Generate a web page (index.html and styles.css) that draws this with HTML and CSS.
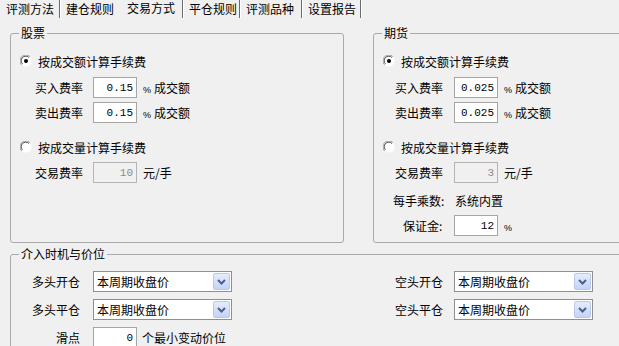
FILE: index.html
```html
<!DOCTYPE html>
<html lang="zh-CN">
<head>
    <meta charset="UTF-8">
    <title>交易方式</title>
    <link rel="stylesheet" href="styles.css">
</head>
<body>
    <div class="tabs">
        <span class="tab t1">评测方法</span>
        <span class="tab t2">建仓规则</span>
        <span class="tab t3 active">交易方式</span>
        <span class="tab t4">平仓规则</span>
        <span class="tab t5">评测品种</span>
        <span class="tab t6">设置报告</span>
    </div>

    <div class="top-row">
        <fieldset class="group stock">
            <legend>股票</legend>
            <div class="radio-row r1">
                <svg class="radio" width="12" height="12" viewBox="0 0 12 12"><circle cx="6" cy="6" r="5.5" fill="#fff"/><path d="M1.6 9.9 A5.5 5.5 0 0 1 9.9 1.6" stroke="#9a9a9a" fill="none"/><path d="M2.5 8.9 A4.4 4.4 0 0 1 8.9 2.5" stroke="#4a4a4a" fill="none"/><circle cx="6" cy="6" r="2" fill="#000"/></svg>
                <span>按成交额计算手续费</span>
            </div>
            <div class="field f1"><span class="lbl">买入费率</span><input class="num" type="text" value="0.15" readonly><span class="unit"><span class="pct">%</span>成交额</span></div>
            <div class="field f2"><span class="lbl">卖出费率</span><input class="num" type="text" value="0.15" readonly><span class="unit"><span class="pct">%</span>成交额</span></div>
            <div class="radio-row r2">
                <svg class="radio" width="12" height="12" viewBox="0 0 12 12"><circle cx="6" cy="6" r="5.5" fill="#fff"/><path d="M1.6 9.9 A5.5 5.5 0 0 1 9.9 1.6" stroke="#9a9a9a" fill="none"/><path d="M2.5 8.9 A4.4 4.4 0 0 1 8.9 2.5" stroke="#4a4a4a" fill="none"/></svg>
                <span>按成交量计算手续费</span>
            </div>
            <div class="field f3"><span class="lbl">交易费率</span><input class="num disabled" type="text" value="10" readonly><span class="unit">元/手</span></div>
        </fieldset>

        <fieldset class="group futures">
            <legend>期货</legend>
            <div class="radio-row r1">
                <svg class="radio" width="12" height="12" viewBox="0 0 12 12"><circle cx="6" cy="6" r="5.5" fill="#fff"/><path d="M1.6 9.9 A5.5 5.5 0 0 1 9.9 1.6" stroke="#9a9a9a" fill="none"/><path d="M2.5 8.9 A4.4 4.4 0 0 1 8.9 2.5" stroke="#4a4a4a" fill="none"/><circle cx="6" cy="6" r="2" fill="#000"/></svg>
                <span>按成交额计算手续费</span>
            </div>
            <div class="field f1"><span class="lbl">买入费率</span><input class="num" type="text" value="0.025" readonly><span class="unit"><span class="pct">%</span>成交额</span></div>
            <div class="field f2"><span class="lbl">卖出费率</span><input class="num" type="text" value="0.025" readonly><span class="unit"><span class="pct">%</span>成交额</span></div>
            <div class="radio-row r2">
                <svg class="radio" width="12" height="12" viewBox="0 0 12 12"><circle cx="6" cy="6" r="5.5" fill="#fff"/><path d="M1.6 9.9 A5.5 5.5 0 0 1 9.9 1.6" stroke="#9a9a9a" fill="none"/><path d="M2.5 8.9 A4.4 4.4 0 0 1 8.9 2.5" stroke="#4a4a4a" fill="none"/></svg>
                <span>按成交量计算手续费</span>
            </div>
            <div class="field f3"><span class="lbl">交易费率</span><input class="num disabled" type="text" value="3" readonly><span class="unit">元/手</span></div>
            <div class="info"><span class="info-key">每手乘数:</span><span>系统内置</span></div>
            <div class="field f4"><span class="lbl margin-lbl">保证金:</span><input class="num" type="text" value="12" readonly><span class="unit"><span class="pct">%</span></span></div>
        </fieldset>
    </div>

    <fieldset class="group entry">
        <legend>介入时机与价位</legend>
        <div class="entry-grid">
            <span class="lbl-left">多头开仓</span>
            <div class="combo"><span>本周期收盘价</span><span class="drop"><svg width="9" height="6" viewBox="0 0 9 6"><path d="M1 1 L4.5 4.5 L8 1" stroke="#4b5f88" stroke-width="2" fill="none"/></svg></span></div>
            <span class="lbl-right">空头开仓</span>
            <div class="combo"><span>本周期收盘价</span><span class="drop"><svg width="9" height="6" viewBox="0 0 9 6"><path d="M1 1 L4.5 4.5 L8 1" stroke="#4b5f88" stroke-width="2" fill="none"/></svg></span></div>

            <span class="lbl-left">多头平仓</span>
            <div class="combo"><span>本周期收盘价</span><span class="drop"><svg width="9" height="6" viewBox="0 0 9 6"><path d="M1 1 L4.5 4.5 L8 1" stroke="#4b5f88" stroke-width="2" fill="none"/></svg></span></div>
            <span class="lbl-right">空头平仓</span>
            <div class="combo"><span>本周期收盘价</span><span class="drop"><svg width="9" height="6" viewBox="0 0 9 6"><path d="M1 1 L4.5 4.5 L8 1" stroke="#4b5f88" stroke-width="2" fill="none"/></svg></span></div>

            <span class="lbl-left">滑点</span>
            <div class="slip"><input class="num" type="text" value="0" readonly><span class="unit">个最小变动价位</span></div>
        </div>
    </fieldset>
</body>
</html>
```

FILE: styles.css
```css
body {
    margin: 0;
    width: 619px;
    height: 346px;
    overflow: hidden;
    background-color: #f0f0f0;
    font-family: "Noto Sans CJK SC", "Noto Sans", sans-serif;
    font-size: 12px;
    color: #000;
}

/* 顶部标签 */
.tabs {
    display: flex;
    height: 18px;
}

.tab {
    box-sizing: border-box;
    height: 18px;
    line-height: 18px;
    padding-left: 6px;
    border-right: 1px solid #6b6b6b;
    box-shadow: 1px 0 0 #fff;
    white-space: nowrap;
}

.t1 { width: 60px; }
.t2 { width: 61px; border-right: none; box-shadow: none; }
.t3 { width: 62px; }
.t4 { width: 57px; }
.t5 { width: 62px; }
.t6 { width: 59px; }

.tab.active {
    line-height: 16px;
}

/* 分组框 */
.group {
    box-sizing: border-box;
    margin: 0;
    padding: 0;
    min-width: 0;
    border: 1px solid #a9a9a9;
    border-radius: 3px;
}

.group legend {
    margin-left: 8px;
    padding: 0 2px;
    line-height: 14px;
    font-size: 12px;
}

.top-row {
    display: flex;
    margin-top: 8px;
    padding-left: 10px;
}

.stock {
    flex-shrink: 0;
    width: 334px;
    height: 217px;
}

.futures {
    flex-shrink: 0;
    width: 270px;
    height: 217px;
    margin-left: 29px;
}

.radio-row {
    display: flex;
    align-items: center;
    height: 20px;
    padding-left: 9px;
}

.radio {
    margin-right: 6px;
}

.field {
    display: flex;
    align-items: center;
    height: 21px;
}

.stock .field { padding-left: 24px; }
.stock .lbl { width: 58px; }
.futures .field { padding-left: 21px; }
.futures .lbl { width: 59px; }

.futures .margin-lbl {
    box-sizing: border-box;
    padding-left: 8px;
}

.r1 { margin-top: 11px; }
.f1 { margin-top: 6px; }
.f2 { margin-top: 4px; }
.r2 { margin-top: 14px; }
.f3 { margin-top: 5px; }
.f4 { margin-top: 5px; }

.info {
    display: flex;
    align-items: center;
    height: 20px;
    margin-top: 7px;
    padding-left: 19px;
}

.info-key {
    width: 62px;
}

input.num {
    box-sizing: border-box;
    width: 44px;
    height: 21px;
    margin: 0;
    padding: 0 3px 0 0;
    border: 1px solid #a5a5a5;
    background: #fff;
    text-align: right;
    font-family: "Liberation Mono", monospace;
    font-size: 11px;
    color: #000;
    outline: none;
}

input.num.disabled {
    background: #f0f0f0;
    border-color: #b4b4b4;
    color: #8a8a8a;
}

.unit {
    margin-left: 6px;
    white-space: nowrap;
}

.pct {
    display: inline-block;
    width: 11px;
    font-family: "Liberation Sans", sans-serif;
    font-size: 9px;
}

/* 介入时机与价位 */
.entry {
    width: 640px;
    height: 120px;
    margin: 4px 0 0 10px;
}

.entry-grid {
    display: grid;
    grid-template-columns: 82px 139px 222px 139px;
    grid-auto-rows: 21px;
    row-gap: 7px;
    margin-top: 10px;
}

.lbl-left,
.lbl-right {
    line-height: 21px;
    text-align: right;
    white-space: nowrap;
}

.lbl-left { padding-right: 13px; }
.lbl-right { padding-right: 11px; }

.combo {
    box-sizing: border-box;
    display: flex;
    align-items: center;
    justify-content: space-between;
    height: 21px;
    padding: 0 1px 0 3px;
    border: 1px solid #8e8f8f;
    background: #fff;
}

.drop {
    box-sizing: border-box;
    display: flex;
    align-items: center;
    justify-content: center;
    width: 17px;
    height: 17px;
    border: 1px solid #b9c9ea;
    border-radius: 2px;
    background: linear-gradient(#e4edfd, #c3d3f9);
}

.slip {
    grid-column: 2 / 4;
    display: flex;
    align-items: center;
}

.slip .unit {
    margin-left: 5px;
}
```
